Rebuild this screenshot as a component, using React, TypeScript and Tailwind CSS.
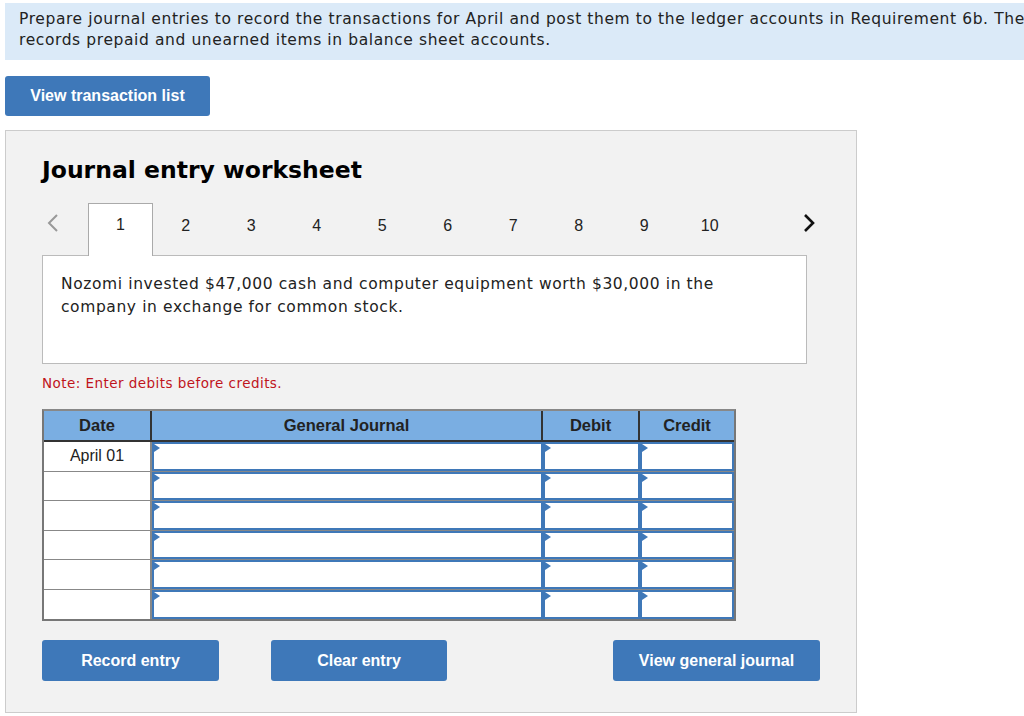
import React from 'react';

const verdana = { fontFamily: '"DejaVu Sans", Verdana, sans-serif' };
const helv = { fontFamily: '"Liberation Sans", Arial, Helvetica, sans-serif' };

const tabs = ['1', '2', '3', '4', '5', '6', '7', '8', '9', '10'];
const rows = ['April 01', '', '', '', '', ''];

function InputCell() {
  return (
    <div className="relative bg-white border-2 border-[#3f78b8]">
      <span className="absolute left-0 top-0 w-0 h-0 border-t-[4px] border-b-[4px] border-l-[6px] border-t-transparent border-b-transparent border-l-[#3f78b8]" />
    </div>
  );
}

export default function App() {
  return (
    <div className="w-[1024px] h-[716px] overflow-hidden bg-white text-[#222]">
      <div className="pt-[3px] pl-[5px]">
        <div
          className="w-[1100px] h-[57px] bg-[#dbeaf8] pl-[14px] pt-[6px] text-[15.5px] leading-[21px] tracking-[0.6px]"
          style={verdana}
        >
          <div className="whitespace-nowrap">
            Prepare journal entries to record the transactions for April and post them to the ledger accounts in Requirement 6b. The
          </div>
          <div className="whitespace-nowrap">records prepaid and unearned items in balance sheet accounts.</div>
        </div>
      </div>

      <div className="pl-[5px] pt-[16px]">
        <button className="w-[205px] h-[40px] rounded-[3px] bg-[#3e78b9] text-white font-bold text-[16px]" style={helv}>
          View transaction list
        </button>
      </div>

      <div className="ml-[5px] mt-[14px] w-[852px] h-[583px] bg-[#f2f2f2] border border-[#cccccc] pl-[36px]">
        <h1 className="pt-[24px] text-[23.5px] leading-[30px] font-bold text-black" style={verdana}>
          Journal entry worksheet
        </h1>

        <div className="mt-[18px] flex items-end h-[52px]" style={helv}>
          <div className="w-[46px] h-full flex items-start pt-[10px] pl-[4px] text-[#999]">
            <svg width="14" height="20" viewBox="0 0 14 20">
              <path d="M11 2 L3 10 L11 18" fill="none" stroke="currentColor" strokeWidth="2" />
            </svg>
          </div>
          {tabs.map((t, i) =>
            i === 0 ? (
              <div
                key={t}
                className="w-[65px] h-[53px] mb-[-1px] relative z-10 bg-white border border-b-0 border-[#aaa] flex items-start justify-center pt-[9px] text-[16px] text-[#222]"
              >
                {t}
              </div>
            ) : (
              <div key={t} className="w-[65.5px] h-full flex items-start justify-center pt-[11px] text-[16px] text-[#222]">
                {t}
              </div>
            )
          )}
          <div className="w-[60px] ml-[36px] h-full flex items-start pt-[10px] justify-center text-[#111]">
            <svg width="14" height="20" viewBox="0 0 14 20">
              <path d="M3 2 L11 10 L3 18" fill="none" stroke="currentColor" strokeWidth="2.6" />
            </svg>
          </div>
        </div>

        <div
          className="w-[765px] h-[109px] bg-white border border-[#bbb] pl-[18px] pt-[17px] text-[15.5px] leading-[23px] tracking-[0.6px]"
          style={verdana}
        >
          Nozomi invested $47,000 cash and computer equipment worth $30,000 in the
          <br />
          company in exchange for common stock.
        </div>

        <p className="mt-[10px] text-[13.5px] leading-[18px] tracking-[0.45px] text-[#c0141c]" style={verdana}>
          Note: Enter debits before credits.
        </p>

        <div className="mt-[17px] w-[694px] border-2 border-[#777] border-t-[#888]" style={helv}>
          <div className="grid grid-cols-[108px_391px_97px_94px] h-[31px] bg-[#7aaee2] text-[16.5px] font-bold text-[#222] border-b-2 border-[#333]">
            <div className="flex items-center justify-center border-r-2 border-[#333]">Date</div>
            <div className="flex items-center justify-center border-r-2 border-[#333]">General Journal</div>
            <div className="flex items-center justify-center border-r-2 border-[#333]">Debit</div>
            <div className="flex items-center justify-center">Credit</div>
          </div>
          {rows.map((d, i) => (
            <div
              key={i}
              className={`grid grid-cols-[108px_391px_97px_94px] h-[29.5px] ${i < rows.length - 1 ? 'border-b border-[#888]' : ''}`}
            >
              <div className="bg-white border-r-2 border-[#888] flex items-start justify-center pt-[2px] text-[16px] text-[#222]">
                {d}
              </div>
              <InputCell />
              <InputCell />
              <InputCell />
            </div>
          ))}
        </div>

        <div className="mt-[19px] flex" style={helv}>
          <button className="w-[177px] h-[41px] rounded-[3px] bg-[#3e78b9] text-white font-bold text-[16px]">Record entry</button>
          <button className="ml-[52px] w-[176px] h-[41px] rounded-[3px] bg-[#3e78b9] text-white font-bold text-[16px]">Clear entry</button>
          <button className="ml-[166px] w-[207px] h-[41px] rounded-[3px] bg-[#3e78b9] text-white font-bold text-[16px]">
            View general journal
          </button>
        </div>
      </div>
    </div>
  );
}
